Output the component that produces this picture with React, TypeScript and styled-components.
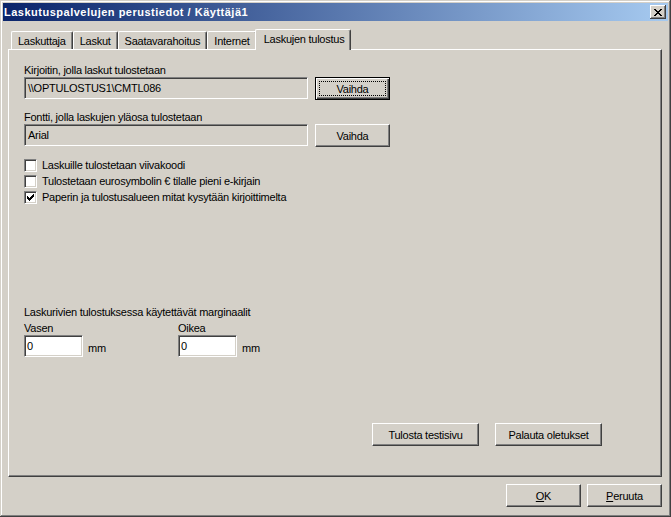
import { createGlobalStyle, styled } from 'styled-components';

const GlobalStyle = createGlobalStyle`
  html, body {
    margin: 0;
    padding: 0;
    background: #d4d0c8;
  }
  body {
    font-family: 'Liberation Sans', Arial, sans-serif;
    font-size: 11px;
    letter-spacing: -0.25px;
    color: #000;
  }
`;

const checkPath =
  'M6 0h1v1h-1z M5 1h2v1h-2z M0 2h1v1h-1z M4 2h3v1h-3z M0 3h2v1h-2z M3 3h3v1h-3z M0 4h5v1h-5z M1 5h3v1h-3z M2 6h1v1h-1z';
const closePath =
  'M0 0h2v1h-2z M6 0h2v1h-2z M1 1h2v1h-2z M5 1h2v1h-2z M2 2h4v1h-4z M3 3h2v1h-2z M2 4h4v1h-4z M1 5h2v1h-2z M5 5h2v1h-2z M0 6h2v1h-2z M6 6h2v1h-2z';

const tabs = ['Laskuttaja', 'Laskut', 'Saatavarahoitus', 'Internet', 'Laskujen tulostus'];

function Checkbox({ checked, label }: { checked?: boolean; label: string }) {
  return (
    <CheckRow>
      <CheckBox>
        {checked && (
          <svg width="7" height="7" viewBox="0 0 7 7" shapeRendering="crispEdges">
            <path d={checkPath} fill="#000" />
          </svg>
        )}
      </CheckBox>
      <span>{label}</span>
    </CheckRow>
  );
}

export default function App() {
  return (
    <>
      <GlobalStyle />
      <Window>
        <TitleBar>
          <Title>Laskutuspalvelujen perustiedot / Käyttäjä1</Title>
          <CloseButton>
            <svg width="8" height="7" viewBox="0 0 8 7" shapeRendering="crispEdges">
              <path d={closePath} fill="#000" />
            </svg>
          </CloseButton>
        </TitleBar>
        <Body>
          <TabStrip>
            {tabs.map((t, i) => (
              <Tab key={t} $active={i === tabs.length - 1}>
                {t}
              </Tab>
            ))}
          </TabStrip>
          <Panel>
            <Label>Kirjoitin, jolla laskut tulostetaan</Label>
            <FieldRow>
              <ReadField>{'\\\\OPTULOSTUS1\\CMTL086'}</ReadField>
              <Button $default>
                <Caption $focus>Vaihda</Caption>
              </Button>
            </FieldRow>
            <Label $top={11}>Fontti, jolla laskujen yläosa tulostetaan</Label>
            <FieldRow>
              <ReadField>Arial</ReadField>
              <Button>
                <Caption>Vaihda</Caption>
              </Button>
            </FieldRow>
            <CheckList>
              <Checkbox label="Laskuille tulostetaan viivakoodi" />
              <Checkbox label="Tulostetaan eurosymbolin € tilalle pieni e-kirjain" />
              <Checkbox checked label="Paperin ja tulostusalueen mitat kysytään kirjoittimelta" />
            </CheckList>
            <Label $top={101}>Laskurivien tulostuksessa käytettävät marginaalit</Label>
            <MarginGrid>
              <MarginCol>
                <Label $top={3}>Vasen</Label>
                <InputRow>
                  <Input>0</Input>
                  <Unit>mm</Unit>
                </InputRow>
              </MarginCol>
              <MarginCol>
                <Label $top={3}>Oikea</Label>
                <InputRow>
                  <Input>0</Input>
                  <Unit>mm</Unit>
                </InputRow>
              </MarginCol>
            </MarginGrid>
            <PanelActions>
              <Button $width={107}>
                <Caption>Tulosta testisivu</Caption>
              </Button>
              <Button $width={107}>
                <Caption>Palauta oletukset</Caption>
              </Button>
            </PanelActions>
          </Panel>
          <Footer>
            <Button>
              <Caption>
                <u>O</u>K
              </Caption>
            </Button>
            <Button>
              <Caption>
                <u>P</u>eruuta
              </Caption>
            </Button>
          </Footer>
        </Body>
      </Window>
    </>
  );
}

const Window = styled.div`
  width: 671px;
  height: 517px;
  box-sizing: border-box;
  padding: 3px;
  display: flex;
  flex-direction: column;
  background: #d4d0c8;
  box-shadow: inset -1px -1px #404040, inset 1px 1px #d4d0c8, inset -2px -2px #808080, inset 2px 2px #fff;
`;
const TitleBar = styled.div`
  height: 18px;
  display: flex;
  align-items: center;
  justify-content: space-between;
  padding: 0 2px 0 1px;
  background: linear-gradient(to right, #0a246a, #a6caf0);
`;
const Title = styled.div`
  color: #fff;
  font-weight: bold;
  font-size: 11px;
  letter-spacing: 0.5px;
  white-space: nowrap;
`;
const CloseButton = styled.div`
  width: 16px;
  height: 14px;
  box-sizing: border-box;
  display: flex;
  align-items: center;
  justify-content: center;
  padding-top: 1px;
  background: #d4d0c8;
  box-shadow: inset -1px -1px #404040, inset 1px 1px #fff, inset -2px -2px #808080;
`;
const Body = styled.div`
  flex: 1;
  display: flex;
  flex-direction: column;
  padding: 8px 6px 7px 5px;
  min-height: 0;
`;
const TabStrip = styled.div`
  display: flex;
  align-items: flex-end;
  height: 20px;
  padding-left: 3px;
  position: relative;
  z-index: 1;
`;
const Tab = styled.div<{ $active?: boolean }>`
  box-sizing: border-box;
  height: ${(p) => (p.$active ? 21 : 18)}px;
  margin: ${(p) => (p.$active ? '0 -1px -1px -2px' : '0')};
  padding: ${(p) => (p.$active ? '0 6px 2px 8px' : '1px 6px 0')};
  display: flex;
  align-items: center;
  white-space: nowrap;
  background: #d4d0c8;
  border-top: 1px solid #fff;
  border-left: 1px solid #fff;
  border-right: 1px solid #404040;
  border-top-left-radius: 2px;
  border-top-right-radius: 2px;
  box-shadow: inset -1px 0 #808080;
`;
const Panel = styled.div`
  flex: 1;
  display: flex;
  flex-direction: column;
  align-items: flex-start;
  padding: 14px 0 30px 15px;
  border: 1px solid;
  border-color: #fff #404040 #404040 #fff;
  box-shadow: inset -1px -1px #808080;
`;
const Label = styled.div<{ $top?: number }>`
  height: 13px;
  line-height: 13px;
  margin-top: ${(p) => p.$top ?? 0}px;
  white-space: nowrap;
`;
const FieldRow = styled.div`
  display: flex;
  align-items: flex-start;
  gap: 7px;
`;
const ReadField = styled.div`
  width: 284px;
  height: 22px;
  box-sizing: border-box;
  padding: 0 3px;
  display: flex;
  align-items: center;
  border: 1px solid;
  border-color: #808080 #fff #fff #808080;
  box-shadow: inset 1px 1px #404040, inset -1px -1px #d4d0c8;
`;
const Button = styled.div<{ $default?: boolean; $width?: number }>`
  width: ${(p) => p.$width ?? 75}px;
  height: 23px;
  box-sizing: border-box;
  padding: 3px;
  display: flex;
  background: #d4d0c8;
  border: 1px solid;
  border-color: ${(p) => (p.$default ? '#000' : '#fff #404040 #404040 #fff')};
  box-shadow: ${(p) =>
    p.$default ? 'inset 1px 1px #fff, inset -1px -1px #404040, inset -2px -2px #808080' : 'inset -1px -1px #808080'};
`;
const Caption = styled.span<{ $focus?: boolean }>`
  flex: 1;
  display: flex;
  align-items: center;
  justify-content: center;
  white-space: nowrap;
  border: 1px dotted ${(p) => (p.$focus ? '#000' : 'transparent')};
  & u {
    text-decoration-thickness: 1px;
    text-underline-offset: 1px;
  }
`;
const CheckList = styled.div`
  margin-top: 10px;
  display: flex;
  flex-direction: column;
`;
const CheckRow = styled.div`
  height: 16px;
  display: flex;
  align-items: center;
  gap: 5px;
  white-space: nowrap;
`;
const CheckBox = styled.span`
  width: 13px;
  height: 13px;
  box-sizing: border-box;
  display: flex;
  align-items: center;
  justify-content: center;
  background: #fff;
  border: 1px solid;
  border-color: #808080 #fff #fff #808080;
  box-shadow: inset 1px 1px #404040, inset -1px -1px #d4d0c8;
`;
const MarginGrid = styled.div`
  display: grid;
  grid-template-columns: 154px auto;
`;
const MarginCol = styled.div`
  display: flex;
  flex-direction: column;
`;
const InputRow = styled.div`
  display: flex;
  align-items: center;
  gap: 5px;
`;
const Input = styled.div`
  width: 59px;
  height: 22px;
  box-sizing: border-box;
  padding: 0 2px;
  display: flex;
  align-items: center;
  background: #fff;
  border: 1px solid;
  border-color: #808080 #fff #fff #808080;
  box-shadow: inset 1px 1px #404040, inset -1px -1px #d4d0c8;
`;
const Unit = styled.span`
  padding-top: 4px;
`;
const PanelActions = styled.div`
  margin-top: auto;
  align-self: stretch;
  display: flex;
  justify-content: flex-end;
  gap: 16px;
  padding-right: 59px;
`;
const Footer = styled.div`
  margin-top: 7px;
  display: flex;
  justify-content: flex-end;
  gap: 6px;
`;
